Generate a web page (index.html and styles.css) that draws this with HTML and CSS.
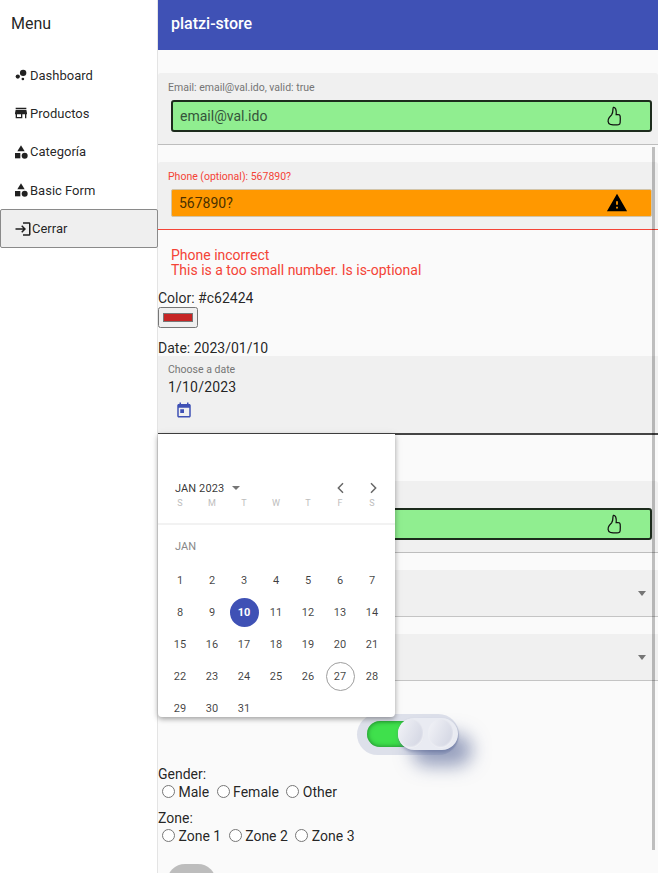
FILE: index.html
```html
<!DOCTYPE html>
<html lang="en">
<head>
  <meta charset="UTF-8">
  <meta name="viewport" content="width=device-width, initial-scale=1.0">
  <title>platzi-store</title>
  <link rel="stylesheet" href="styles.css">
</head>
<body>
  <div class="appLayout">
    <!-- side menu -->
    <aside class="sideNav">
      <h1 class="sideTitle">Menu</h1>
      <nav class="sideList">
        <a class="sideItem">
          <svg class="sideIcon" viewBox="0 0 24 24"><circle cx="7.2" cy="14.4" r="3.2"/><circle cx="14.8" cy="18" r="2"/><circle cx="15.2" cy="8.8" r="4.8"/></svg>
          Dashboard
        </a>
        <a class="sideItem">
          <svg class="sideIcon" viewBox="0 0 24 24"><path d="M20 4H4v2h16V4zm1 10v-2l-1-5H4l-1 5v2h1v6h10v-6h4v6h2v-6h1zm-9 4H6v-4h6v4z"/></svg>
          Productos
        </a>
        <a class="sideItem">
          <svg class="sideIcon" viewBox="0 0 24 24"><path d="M12 2l-5.5 9h11z"/><circle cx="17.5" cy="17.5" r="4.5"/><path d="M3 13.5h8v8H3z"/></svg>
          Categoría
        </a>
        <a class="sideItem">
          <svg class="sideIcon" viewBox="0 0 24 24"><path d="M12 2l-5.5 9h11z"/><circle cx="17.5" cy="17.5" r="4.5"/><path d="M3 13.5h8v8H3z"/></svg>
          Basic Form
        </a>
        <a class="sideItem sideItemActive">
          <svg class="sideIcon" viewBox="0 0 24 24"><path d="M11 7L9.6 8.4l2.6 2.6H2v2h10.2l-2.6 2.6L11 17l5-5-5-5zm9 12h-8v2h8c1.1 0 2-.9 2-2V5c0-1.1-.9-2-2-2h-8v2h8v14z"/></svg>
          Cerrar
        </a>
      </nav>
    </aside>

    <main class="mainArea">
      <header class="topBar">platzi-store</header>
      <div class="scrollLine"></div>

      <form class="formArea">
        <!-- email -->
        <div class="field">
          <div class="fieldLabel">Email: email@val.ido, valid: true</div>
          <div class="validBox">
            <span>email@val.ido</span>
            <svg class="thumbIcon" viewBox="0 0 20 22"><path d="M2.6 12.6c-.9 1.3-1.6 2.9-1.4 4.4.2 1.7 1 3 2.6 3.4 2.6.5 6.6.7 9 .3 1.2-.3 1.7-1 1.8-2.2.2-2.3.3-5.2 0-7.4-.2-1-.8-1.5-1.8-1.5l-2.6-.1c.2-2 .3-4.200-.5-6.300C9.200 2 8 1 7.200 1.400c-.7.4-.6 1.600-.6 2.500 0 2.400-.4 4.300-1.500 5.800z"/></svg>
          </div>
        </div>

        <!-- phone -->
        <div class="field fieldError">
          <div class="fieldLabel fieldLabelError">Phone (optional): 567890?</div>
          <div class="warnBox">
            <span>567890?</span>
            <svg class="warnIcon" viewBox="0 0 24 24"><path d="M1 21h22L12 2 1 21zm12-3h-2v-2h2v2zm0-4h-2v-4h2v4z"/></svg>
          </div>
        </div>
        <div class="errorText">
          Phone incorrect<br>
          This is a too small number. Is is-optional
        </div>

        <div class="plainLine colorLine">Color: #c62424</div>
        <input class="colorInput" type="color" value="#c62424">

        <div class="plainLine dateLine">Date: 2023/01/10</div>
        <div class="dateField">
          <div class="fieldLabel dateLabel">Choose a date</div>
          <div class="dateValue">1/10/2023</div>
          <svg class="dateIcon" viewBox="0 0 24 24"><path d="M19 4h-1V2h-2v2H8V2H6v2H5c-1.110 0-1.990.9-1.990 2L3 20c0 1.100.89 2 2 2h14c1.100 0 2-.9 2-2V6c0-1.100-.9-2-2-2zm0 16H5V9h14v11zM7 11h5v5H7z"/></svg>
        </div>

        <!-- date popup -->
        <div class="calendar">
          <div class="calHead">
            <span class="calMonth">JAN 2023</span>
            <span class="calCaret"></span>
            <svg class="calArrow calArrowPrev" viewBox="0 0 24 24"><path d="M15 5l-7 7 7 7"/></svg>
            <svg class="calArrow" viewBox="0 0 24 24"><path d="M9 5l7 7-7 7"/></svg>
          </div>
          <div class="calGrid calWeek">
            <span>S</span><span>M</span><span>T</span><span>W</span><span>T</span><span>F</span><span>S</span>
          </div>
          <div class="calRule"></div>
          <div class="calLabel">JAN</div>
          <div class="calGrid calDays" id="calDays"></div>
        </div>

        <!-- second email -->
        <div class="field secondField">
          <div class="validBox validBoxLow">
            <span></span>
            <svg class="thumbIcon" viewBox="0 0 20 22"><path d="M2.6 12.6c-.9 1.3-1.6 2.9-1.4 4.4.2 1.7 1 3 2.6 3.4 2.6.5 6.6.7 9 .3 1.2-.3 1.7-1 1.8-2.2.2-2.3.3-5.2 0-7.4-.2-1-.8-1.5-1.8-1.5l-2.6-.1c.2-2 .3-4.200-.5-6.300C9.200 2 8 1 7.200 1.400c-.7.4-.6 1.600-.6 2.500 0 2.400-.4 4.300-1.500 5.800z"/></svg>
          </div>
        </div>

        <div class="selectField"><span class="selectCaret"></span></div>
        <div class="selectField"><span class="selectCaret"></span></div>

        <!-- toggle -->
        <div class="toggleRow">
          <div class="toggle">
            <div class="toggleFill"></div>
            <div class="toggleKnobs"><span class="knob"></span><span class="knob"></span></div>
          </div>
        </div>

        <div class="plainLine genderLine">Gender:</div>
        <div class="radioRow">
          <label><input type="radio" name="gender"> Male</label>
          <label><input type="radio" name="gender"> Female</label>
          <label><input type="radio" name="gender"> Other</label>
        </div>

        <div class="plainLine zoneLine">Zone:</div>
        <div class="radioRow">
          <label><input type="radio" name="zone"> Zone 1</label>
          <label><input type="radio" name="zone"> Zone 2</label>
          <label><input type="radio" name="zone"> Zone 3</label>
        </div>

        <button class="sendButton" type="button" disabled>Enviar</button>
      </form>
    </main>
  </div>

  <script>
    // fill the calendar days
    const calDays = document.getElementById("calDays");
    for (let day = 1; day <= 31; day++) {
      const cell = document.createElement("span");
      cell.textContent = day;
      if (day === 10) cell.className = "daySelected";
      if (day === 27) cell.className = "dayToday";
      calDays.appendChild(cell);
    }
  </script>
</body>
</html>
```

FILE: styles.css
```css
html, body {
  margin: 0;
  height: 873px;
  overflow: hidden;
}

body {
  font-family: Roboto, "Liberation Sans", sans-serif;
  font-size: 14px;
  color: rgba(0, 0, 0, 0.87);
  background-color: #fafafa;
}

.appLayout {
  display: flex;
  height: 873px;
}

/* side menu */
.sideNav {
  width: 157px;
  flex: none;
  background-color: #fff;
  border-right: 1px solid #e4e4e4;
}
.sideTitle {
  margin: 0;
  padding: 0 0 0 11px;
  height: 47px;
  font-size: 16px;
  font-weight: 400;
  line-height: 47px;
}
.sideList {
  display: flex;
  flex-direction: column;
  padding-top: 9px;
}
.sideItem {
  display: flex;
  align-items: center;
  gap: 1px;
  height: 38.3px;
  padding-left: 13px;
  font-size: 13px;
}
.sideIcon {
  width: 16px;
  height: 16px;
  fill: rgba(0, 0, 0, 0.87);
}
.sideItemActive {
  box-sizing: border-box;
  height: 39px;
  width: 158px;
  position: relative;
  background-color: #efefef;
  border: 1px solid #8a8a8a;
  border-radius: 2px;
  padding-left: 13px;
  gap: 0;
}
.sideItemActive .sideIcon {
  width: 18px;
  height: 18px;
}

/* top bar */
.mainArea {
  flex: 1;
  min-width: 0;
  position: relative;
}
.topBar {
  height: 50px;
  padding-left: 13px;
  background-color: #3f51b5;
  color: #fff;
  font-size: 16px;
  font-weight: 500;
  line-height: 47px;
  box-sizing: border-box;
}
.scrollLine {
  position: absolute;
  left: 494px;
  top: 147px;
  width: 3px;
  height: 703px;
  background-color: rgba(0, 0, 0, 0.24);
  z-index: 3;
}

/* form */
.formArea {
  position: relative;
  padding-top: 23px;
}
.field {
  box-sizing: border-box;
  height: 72px;
  margin-bottom: 17px;
  padding-top: 8px;
  background-color: #f0f0f0;
  border-bottom: 1.5px solid #bdbdbd;
  border-radius: 3px 3px 0 0;
}
.fieldLabel {
  padding-left: 10px;
  height: 14px;
  font-size: 10.5px;
  line-height: 14px;
  color: #757575;
}
.fieldLabelError {
  color: #f44336;
}
.validBox {
  box-sizing: border-box;
  display: flex;
  align-items: center;
  justify-content: space-between;
  height: 32px;
  margin: 5px 6px 0 13px;
  padding: 0 25px 0 7px;
  background-color: #90ee90;
  border: 2px solid #1c2b1c;
  border-radius: 3px;
  color: #35533a;
}
.validBoxLow {
  margin-top: 19px;
}
.thumbIcon {
  width: 18px;
  height: 20px;
  fill: none;
  stroke: #111;
  stroke-width: 1.4;
}
.fieldError {
  height: 68px;
  margin-bottom: 0;
  border-bottom: 1.5px solid #f44336;
}
.warnBox {
  box-sizing: border-box;
  display: flex;
  align-items: center;
  justify-content: space-between;
  height: 28px;
  margin: 5px 6px 0 13px;
  padding: 0 23px 0 7px;
  background-color: #ff9800;
  border: 1px solid #d2c4a8;
  border-radius: 2px;
  color: #4a3000;
}
.warnIcon {
  width: 22px;
  height: 22px;
  fill: #000;
}
.errorText {
  padding: 18px 0 0 13px;
  line-height: 15px;
  color: #f44336;
}
.plainLine {
  height: 16px;
  line-height: 16px;
}
.colorLine {
  margin-top: 12px;
}
.colorInput {
  display: block;
  box-sizing: border-box;
  width: 40px;
  height: 21px;
  margin: 1px 0 0;
  padding: 1px 2px;
}
.dateLine {
  margin-top: 12px;
}
.dateField {
  box-sizing: border-box;
  height: 79px;
  padding-top: 8px;
  background-color: #f0f0f0;
  border-bottom: 2px solid #444;
}
.dateLabel {
  height: 12px;
  line-height: 12px;
}
.dateValue {
  padding-left: 10px;
  height: 18px;
  line-height: 18px;
  letter-spacing: 0.2px;
  margin-top: 2px;
}
.dateIcon {
  display: block;
  width: 18px;
  height: 18px;
  margin: 5px 0 0 17px;
  fill: #3f51b5;
}

/* date popup */
.calendar {
  position: absolute;
  left: 0;
  top: 384px;
  z-index: 2;
  box-sizing: border-box;
  width: 237px;
  height: 283px;
  padding: 0 6px;
  background-color: #fff;
  border-radius: 0 0 4px 4px;
  box-shadow: 0 2px 5px rgba(0, 0, 0, 0.3), 0 1px 8px rgba(0, 0, 0, 0.1);
}
.calHead {
  display: flex;
  align-items: center;
  height: 24px;
  margin-top: 21px;
  padding-left: 11px;
  position: relative;
  top: 21px;
  font-size: 11px;
  letter-spacing: 0.1px;
  color: rgba(0, 0, 0, 0.8);
}
.calCaret {
  width: 0;
  height: 0;
  margin-left: 8px;
  margin-right: auto;
  border-left: 4px solid transparent;
  border-right: 4px solid transparent;
  border-top: 4px solid #757575;
}
.calArrow {
  width: 16px;
  height: 16px;
  margin-right: 8px;
  fill: none;
  stroke: #666;
  stroke-width: 2.2;
}
.calArrowPrev {
  margin-right: 16px;
}
.calGrid {
  display: grid;
  grid-template-columns: repeat(7, 32px);
  text-align: center;
}
.calWeek {
  margin-top: 0;
  padding-top: 14px;
  position: relative;
  top: 3px;
  font-size: 9px;
  line-height: 14px;
  color: #bdbdbd;
}
.calRule {
  height: 2px;
  margin: 13px -6px 0;
  background-color: #f2f2f2;
  position: relative;
  top: 3px;
}
.calLabel {
  padding: 18px 0 0 11px;
  height: 14px;
  font-size: 11px;
  line-height: 14px;
  color: #888;
}
.calDays {
  margin-top: 10px;
  grid-auto-rows: 32px;
  font-size: 11px;
  line-height: 32px;
  color: rgba(0, 0, 0, 0.75);
}
.calDays span {
  box-sizing: border-box;
  width: 29px;
  height: 29px;
  line-height: 29px;
  margin: 1.5px;
  border-radius: 50%;
}
.calDays .daySelected {
  background-color: #3f51b5;
  color: #fff;
  font-weight: 700;
}
.calDays .dayToday {
  border: 1px solid #9e9e9e;
  line-height: 27px;
}

/* lower fields */
.secondField {
  margin-bottom: 17px;
  padding-top: 8px;
  margin-top: 46px;
}
.selectField {
  position: relative;
  box-sizing: border-box;
  height: 47px;
  margin-bottom: 17px;
  background-color: #f0f0f0;
  border-bottom: 1.5px solid #c4c4c4;
}
.selectCaret {
  position: absolute;
  right: 12px;
  top: 21px;
  border-left: 4.5px solid transparent;
  border-right: 4.5px solid transparent;
  border-top: 5px solid #757575;
}

/* toggle */
.toggleRow {
  display: flex;
  justify-content: center;
  margin-top: 33px;
}
.toggle {
  position: relative;
  box-sizing: border-box;
  width: 102px;
  height: 41px;
  background-color: #dde0ea;
  border-radius: 21px;
}
.toggleFill {
  position: absolute;
  left: 10px;
  top: 7px;
  width: 50px;
  height: 26px;
  border-radius: 13px;
  background-color: #3fe04c;
  box-shadow: inset 0 0 5px #1c7a2a;
}
.toggleKnobs {
  position: absolute;
  left: 41px;
  top: 4px;
  display: flex;
  gap: 4px;
  padding: 1px 4px 2px 0;
  background-color: #e9ebf2;
  border-radius: 17px;
  box-shadow: 14px 16px 18px rgba(70, 85, 140, 0.55), 0 2px 3px rgba(90, 100, 140, 0.4);
}
.knob {
  width: 26px;
  height: 29px;
  border-radius: 50%;
  background: linear-gradient(115deg, #f3f4f8, #cfd2e0);
  box-shadow: inset -1px -1px 2px rgba(255, 255, 255, 0.7);
}

/* radios */
.genderLine {
  margin-top: 11px;
}
.zoneLine {
  margin-top: 12px;
}
.radioRow {
  height: 16px;
  line-height: 16px;
}
.radioRow label {
  margin-right: 0;
}
.radioRow input {
  margin: 3px 0 0 4px;
  vertical-align: -1px;
}

.sendButton {
  display: block;
  width: 49px;
  height: 36px;
  margin: 22px 0 0 9px;
  padding: 0;
  border: none;
  border-radius: 18px;
  background-color: #bdbdbd;
  color: #f2f2f2;
  font-family: inherit;
  font-size: 14px;
  font-weight: 500;
}
```
